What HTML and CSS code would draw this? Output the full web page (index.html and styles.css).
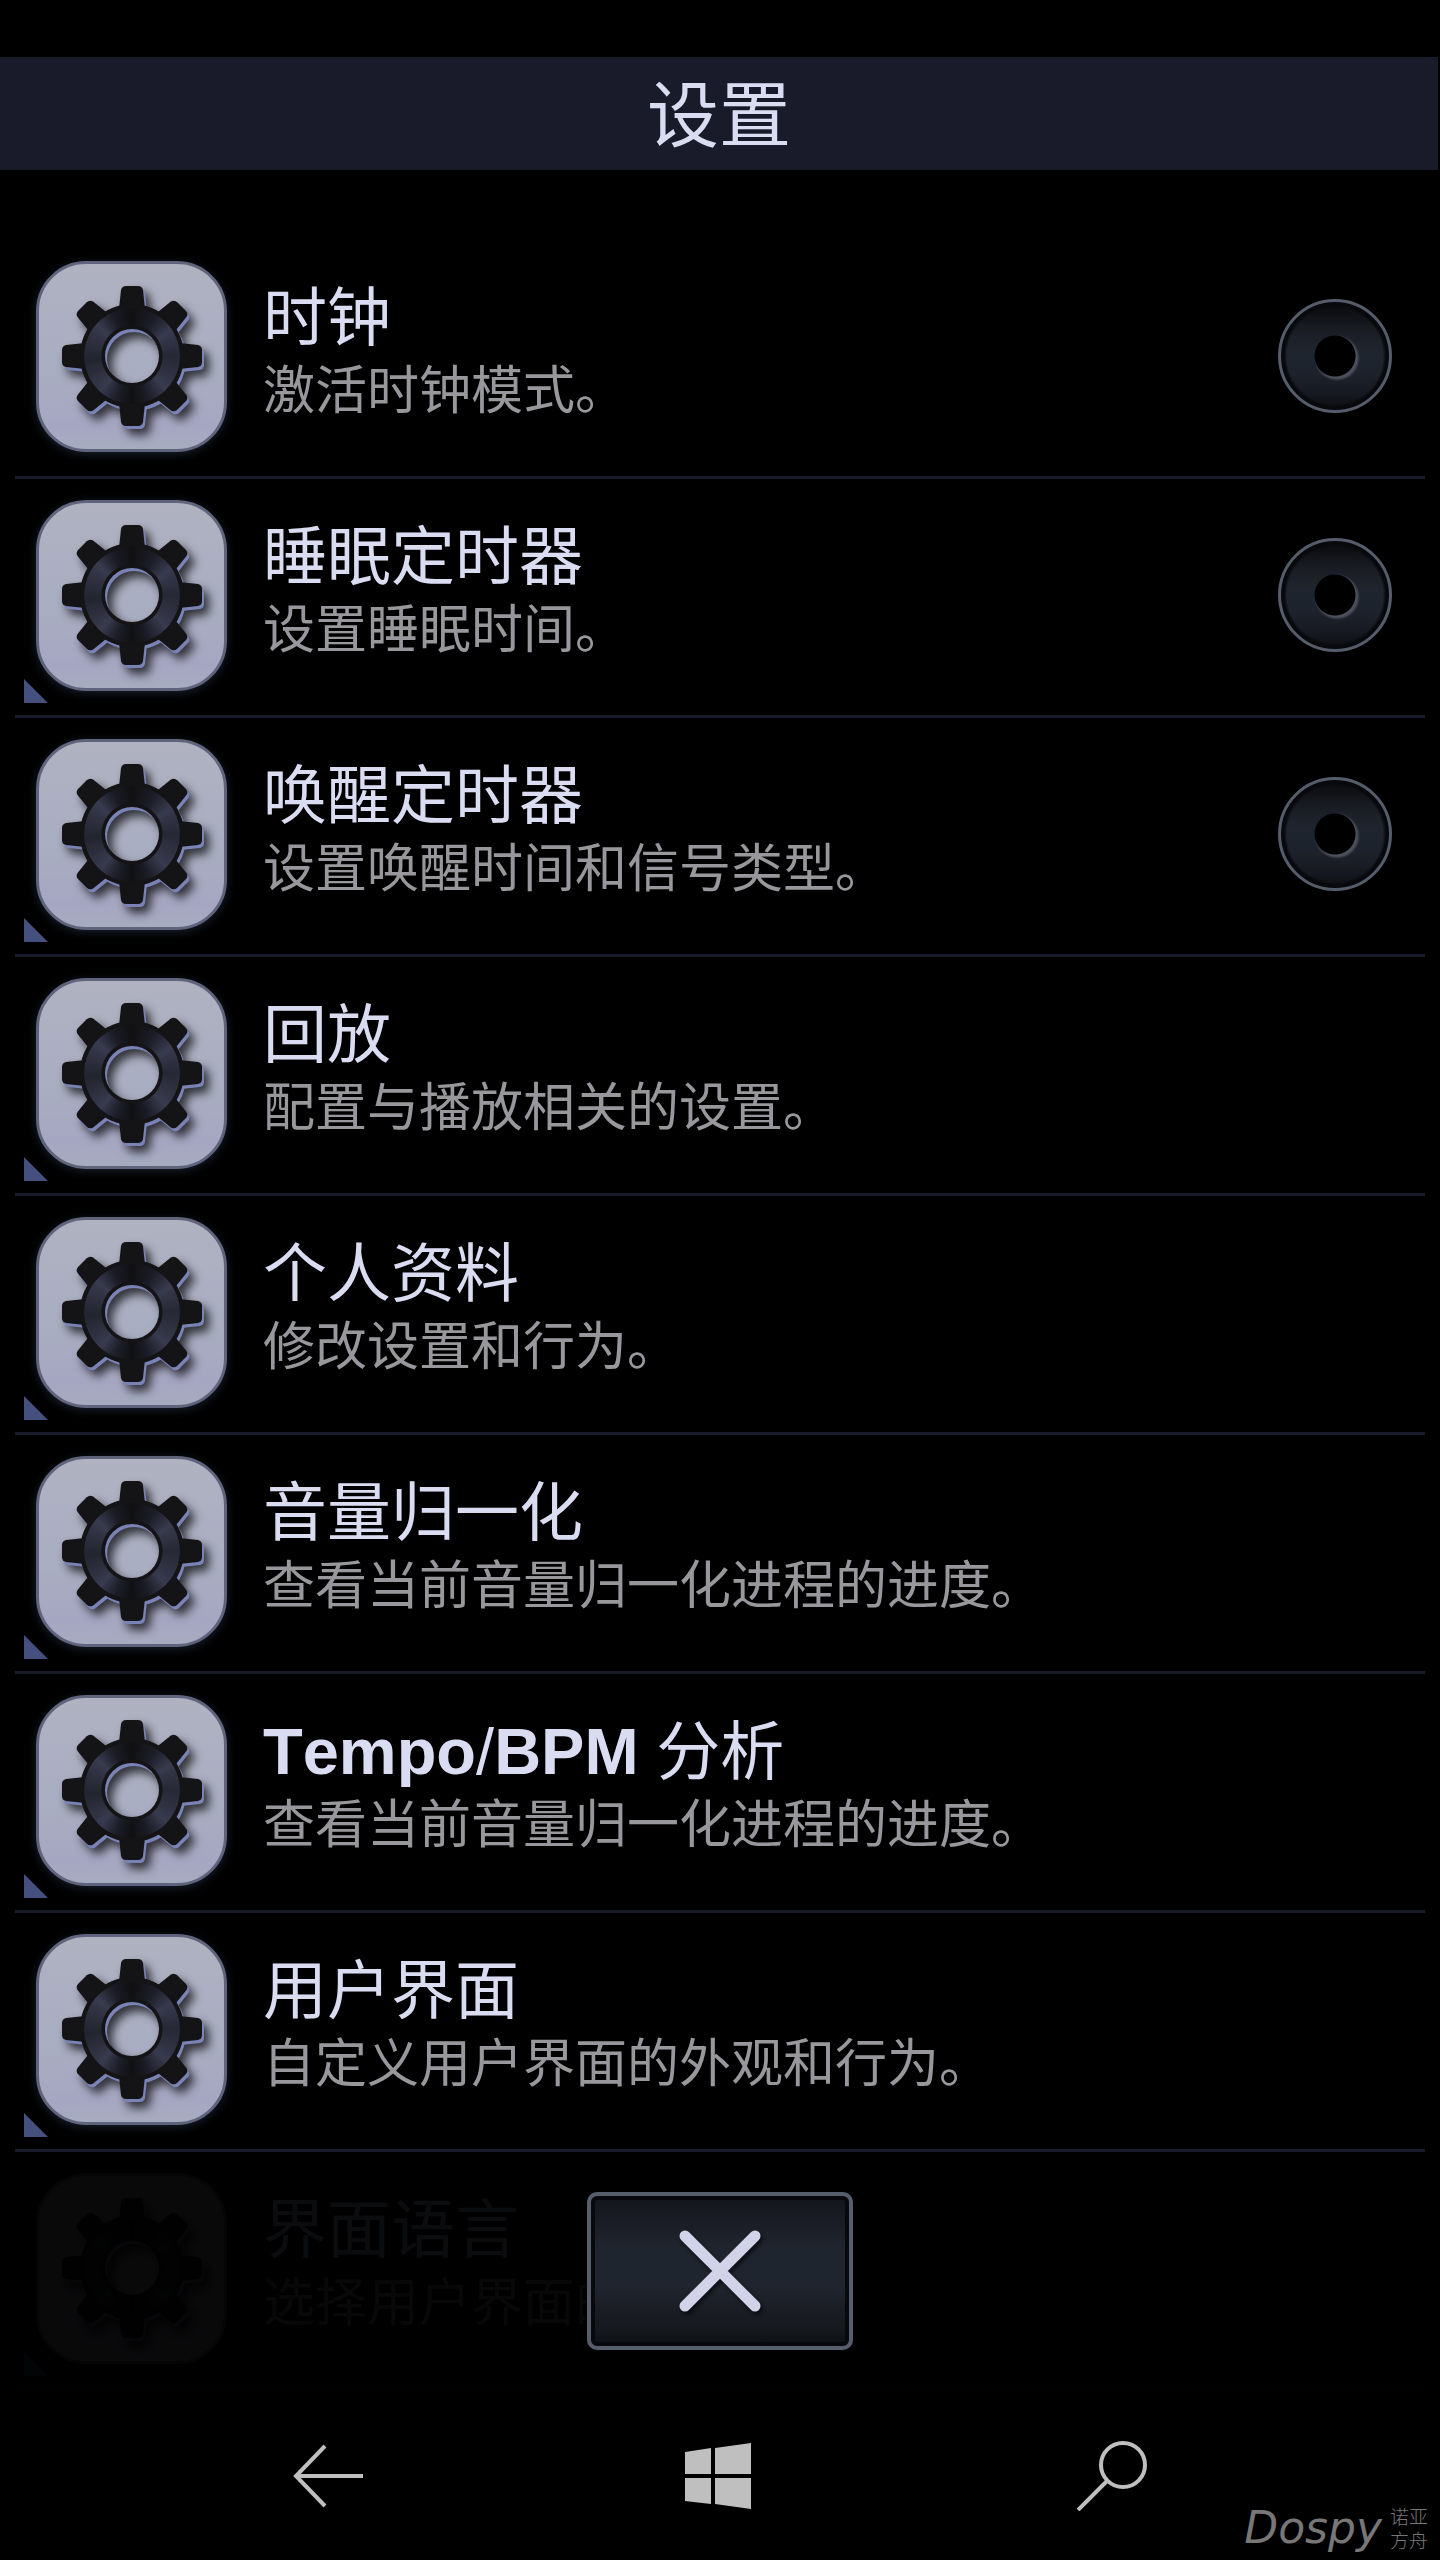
FILE: index.html
```html
<!DOCTYPE html>
<html lang="zh-CN">
<head>
    <meta charset="UTF-8">
    <meta name="viewport" content="width=device-width, initial-scale=1.0">
    <title>设置</title>
    <link rel="stylesheet" href="styles.css">
</head>
<body>
    <svg class="sprite" aria-hidden="true">
        <symbol id="gear" viewBox="-90 -90 180 180">
            <path id="tooth" d="M-13 -47 L-11 -66 Q-10 -70 -6 -70 H6 Q10 -70 11 -66 L13 -47 Z"/>
            <use href="#tooth" transform="rotate(45)"/>
            <use href="#tooth" transform="rotate(90)"/>
            <use href="#tooth" transform="rotate(135)"/>
            <use href="#tooth" transform="rotate(180)"/>
            <use href="#tooth" transform="rotate(225)"/>
            <use href="#tooth" transform="rotate(270)"/>
            <use href="#tooth" transform="rotate(315)"/>
            <path fill-rule="evenodd" d="M-52 0 A52 52 0 1 1 52 0 A52 52 0 1 1 -52 0 Z M-27 0 A27 27 0 1 0 27 0 A27 27 0 1 0 -27 0 Z"/>
        </symbol>
    </svg>

    <header class="header">
        <h1>设置</h1>
    </header>

    <main class="content">
        <ul class="list">
            <li class="item">
                <label class="link" for="clock">
                    <span class="icon"><svg><use href="#gear"/></svg></span>
                    <span class="text">
                        <span class="title">时钟</span>
                        <span class="desc">激活时钟模式。</span>
                    </span>
                </label>
                <input class="toggle" type="checkbox" id="clock">
            </li>
            <li class="item more">
                <label class="link" for="sleep">
                    <span class="icon"><svg><use href="#gear"/></svg></span>
                    <span class="text">
                        <span class="title">睡眠定时器</span>
                        <span class="desc">设置睡眠时间。</span>
                    </span>
                </label>
                <input class="toggle" type="checkbox" id="sleep">
            </li>
            <li class="item more">
                <label class="link" for="wake">
                    <span class="icon"><svg><use href="#gear"/></svg></span>
                    <span class="text">
                        <span class="title">唤醒定时器</span>
                        <span class="desc">设置唤醒时间和信号类型。</span>
                    </span>
                </label>
                <input class="toggle" type="checkbox" id="wake">
            </li>
            <li class="item more">
                <a class="link" href="#playback">
                    <span class="icon"><svg><use href="#gear"/></svg></span>
                    <span class="text">
                        <span class="title">回放</span>
                        <span class="desc">配置与播放相关的设置。</span>
                    </span>
                </a>
            </li>
            <li class="item more">
                <a class="link" href="#profile">
                    <span class="icon"><svg><use href="#gear"/></svg></span>
                    <span class="text">
                        <span class="title">个人资料</span>
                        <span class="desc">修改设置和行为。</span>
                    </span>
                </a>
            </li>
            <li class="item more">
                <a class="link" href="#volume">
                    <span class="icon"><svg><use href="#gear"/></svg></span>
                    <span class="text">
                        <span class="title">音量归一化</span>
                        <span class="desc">查看当前音量归一化进程的进度。</span>
                    </span>
                </a>
            </li>
            <li class="item more">
                <a class="link" href="#tempo">
                    <span class="icon"><svg><use href="#gear"/></svg></span>
                    <span class="text">
                        <span class="title"><span class="latin"><b>Tempo</b>/<b>BPM</b></span> 分析</span>
                        <span class="desc">查看当前音量归一化进程的进度。</span>
                    </span>
                </a>
            </li>
            <li class="item more">
                <a class="link" href="#interface">
                    <span class="icon"><svg><use href="#gear"/></svg></span>
                    <span class="text">
                        <span class="title">用户界面</span>
                        <span class="desc">自定义用户界面的外观和行为。</span>
                    </span>
                </a>
            </li>
            <li class="item more faded">
                <a class="link" href="#language">
                    <span class="icon"><svg><use href="#gear"/></svg></span>
                    <span class="text">
                        <span class="title">界面语言</span>
                        <span class="desc">选择用户界面的语言。</span>
                    </span>
                </a>
            </li>
        </ul>

        <div class="close-bar">
            <button class="close" type="button" aria-label="关闭">
                <svg viewBox="0 0 90 90"><path d="M10 10 L80 80 M80 10 L10 80"/></svg>
            </button>
        </div>
    </main>

    <nav class="navbar">
        <button type="button" aria-label="返回">
            <svg viewBox="0 0 70 70"><path class="line" d="M70 35 H3 M32 5 L3 35 L32 65"/></svg>
        </button>
        <button type="button" aria-label="开始">
            <svg viewBox="0 0 70 70"><path class="solid" d="M0 11 L26 7 V33 H0 Z M30 7 L66 2 V33 H30 Z M0 37 H26 V63 L0 60 Z M30 37 H66 V68 L30 63 Z"/></svg>
        </button>
        <button type="button" aria-label="搜索">
            <svg viewBox="0 0 70 70"><circle class="line" cx="46" cy="24" r="22"/><path class="line" d="M30 40 L1 69"/></svg>
        </button>
    </nav>

    <div class="watermark">
        <span class="brand">Dospy</span>
        <span class="brand-cn">诺亚<br>方舟</span>
    </div>
</body>
</html>
```

FILE: styles.css
```css
* {
    box-sizing: border-box;
}

body {
    position: relative;
    margin: 0;
    padding-top: 57px;
    min-height: 100vh;
    display: flex;
    flex-direction: column;
    background-color: #000;
    color: #dadcf2;
    font-family: "Liberation Sans", "Noto Sans CJK SC", sans-serif;
}

button {
    padding: 0;
    border: none;
    background: none;
    cursor: pointer;
}

.sprite {
    position: absolute;
    width: 0;
    height: 0;
}

/* Header */
.header {
    margin-right: 2px;
    padding-top: 5px;
    background-color: #191b2b;
    text-align: center;
}

.header h1 {
    margin: 0;
    font-size: 72px;
    font-weight: normal;
    line-height: 108px;
}

/* List */
.content {
    position: relative;
    padding: 70px 15px 0;
}

.list {
    margin: 0;
    padding: 0;
    list-style: none;
}

.item {
    position: relative;
    display: flex;
    align-items: center;
    height: 239px;
    padding: 0 33px 4px 21px;
    border-bottom: 3px solid #191b2b;
}

/* Small corner mark on items with more options */
.more::after {
    content: "";
    position: absolute;
    left: 9px;
    bottom: 12px;
    width: 24px;
    height: 24px;
    background-color: #46507f;
    clip-path: polygon(0 0, 100% 100%, 0 100%);
}

.faded {
    opacity: 0.05;
}

.link {
    flex: 1;
    display: flex;
    align-items: center;
    gap: 36px;
    color: inherit;
    text-decoration: none;
    cursor: pointer;
}

.text {
    display: flex;
    flex-direction: column;
    padding-bottom: 6px;
}

.title {
    font-size: 64px;
    line-height: 76px;
}

.latin {
    font-size: 65px;
    font-kerning: none;
}

.desc {
    color: #98979b;
    font-size: 52px;
    line-height: 70px;
}

/* Gear icon */
.icon {
    flex: none;
    display: grid;
    place-items: center;
    width: 191px;
    height: 191px;
    border: 3px solid #5f637c;
    border-radius: 50px;
    background: linear-gradient(#b0b2c1, #a8adc1 60%, #a6a6c2 88%, #a6acc0);
    box-shadow: 0 2px 10px rgba(80, 105, 150, 0.3);
}

.icon svg {
    grid-area: 1 / 1;
    width: 180px;
    height: 180px;
    fill: #141416;
    filter: drop-shadow(2px 3px 0 #7a83b6) drop-shadow(5px 6px 5px rgba(0, 0, 0, 0.7));
}

.icon::after {
    content: "";
    grid-area: 1 / 1;
    z-index: 1;
    width: 96px;
    height: 96px;
    border-radius: 50%;
    background: conic-gradient(#111113, #1c1d27 30deg, #383a4e 56deg, #262834 90deg, #383a4e 134deg, #1a1b24 160deg, #111113 180deg, #1c1d27 200deg, #383a4e 222deg, #22242e 265deg, #383a4e 312deg, #1a1b24 335deg, #111113);
    mask: radial-gradient(circle, transparent 30px, #000 31px);
}

/* Round toggle */
.toggle {
    appearance: none;
    flex: none;
    width: 114px;
    height: 114px;
    margin: 0;
    border: 3px solid #565d6a;
    border-radius: 50%;
    background:
        radial-gradient(circle, #000 20px, transparent 21px),
        radial-gradient(circle at 56px 56px, #4c505c 20px, transparent 23px),
        radial-gradient(circle, transparent 48px, #07090c 51px),
        linear-gradient(#0c0d10 5%, #1a1c24 25%, #1f252e 45%, #1d232c 65%, #171921 85%, #0c0d10);
    cursor: pointer;
}

.toggle:checked {
    border-color: #dadcf2;
}

/* Close button, over the end of the list */
.close-bar {
    position: absolute;
    left: 0;
    right: 0;
    bottom: 41px;
    display: flex;
    justify-content: center;
    pointer-events: none;
}

.close {
    display: grid;
    place-items: center;
    width: 266px;
    height: 158px;
    border: 4px solid #565e6b;
    border-radius: 10px;
    background: linear-gradient(#12151c, #1b1d26 18%, #1f252e 35%, #1f252e 60%, #1a1c24 78%, #16191e 88%, #0d0f14);
    box-shadow: inset 0 0 0 4px #07090c;
    pointer-events: auto;
}

.close svg {
    width: 90px;
    height: 90px;
    fill: none;
    stroke: #d2d3e8;
    stroke-width: 11;
    stroke-linecap: round;
    filter: drop-shadow(2px 3px 2px rgba(0, 0, 0, 0.6));
}

/* System navigation */
.navbar {
    flex: 1;
    display: flex;
    justify-content: space-between;
    align-items: center;
    padding: 0 293px;
}

.navbar svg {
    display: block;
    width: 70px;
    height: 70px;
}

.line {
    fill: none;
    stroke: #bfbfbf;
    stroke-width: 4;
}

.solid {
    fill: #bfbfbf;
}

.watermark {
    position: absolute;
    right: 12px;
    bottom: 8px;
    display: flex;
    align-items: center;
    gap: 8px;
    color: #777;
}

.brand {
    font-family: "DejaVu Sans", sans-serif;
    font-size: 44px;
    font-style: italic;
    line-height: 48px;
}

.brand-cn {
    font-family: "Noto Sans CJK SC", sans-serif;
    font-size: 19px;
    font-weight: 300;
    line-height: 24px;
}
```
